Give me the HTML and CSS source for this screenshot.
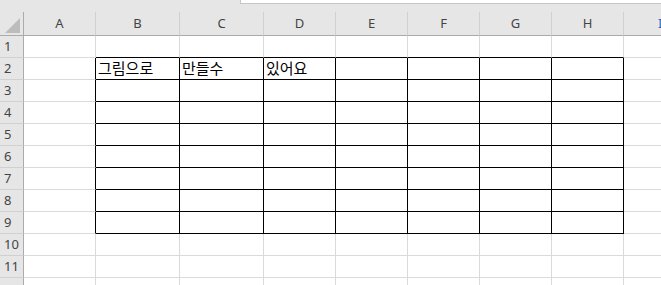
FILE: index.html
```html
<!DOCTYPE html>
<html lang="ko">
<head>
    <meta charset="UTF-8">
    <title>Sheet1</title>
    <link rel="stylesheet" href="styles.css">
</head>
<body>
    <div class="topbar"><div class="formula-box"></div></div>
    <div class="sheet">
        <!-- kolomkoppen -->
        <div class="corner"><span class="tri"></span></div>
        <div class="colhead">A</div><div class="colhead">B</div><div class="colhead">C</div><div class="colhead">D</div>
        <div class="colhead">E</div><div class="colhead">F</div><div class="colhead">G</div><div class="colhead">H</div><div class="colhead last">I</div>

        <div class="rowhead">1</div>
        <div class="cell"></div><div class="cell tb"></div><div class="cell tb"></div><div class="cell tb"></div><div class="cell tb"></div><div class="cell tb"></div><div class="cell tb"></div><div class="cell tb"></div><div class="cell"></div>

        <div class="rowhead">2</div>
        <div class="cell lb"></div><div class="cell box">그림으로</div><div class="cell box">만들수</div><div class="cell box">있어요</div><div class="cell box"></div><div class="cell box"></div><div class="cell box"></div><div class="cell box"></div><div class="cell"></div>

        <div class="rowhead">3</div>
        <div class="cell lb"></div><div class="cell box"></div><div class="cell box"></div><div class="cell box"></div><div class="cell box"></div><div class="cell box"></div><div class="cell box"></div><div class="cell box"></div><div class="cell"></div>

        <div class="rowhead">4</div>
        <div class="cell lb"></div><div class="cell box"></div><div class="cell box"></div><div class="cell box"></div><div class="cell box"></div><div class="cell box"></div><div class="cell box"></div><div class="cell box"></div><div class="cell"></div>

        <div class="rowhead">5</div>
        <div class="cell lb"></div><div class="cell box"></div><div class="cell box"></div><div class="cell box"></div><div class="cell box"></div><div class="cell box"></div><div class="cell box"></div><div class="cell box"></div><div class="cell"></div>

        <div class="rowhead">6</div>
        <div class="cell lb"></div><div class="cell box"></div><div class="cell box"></div><div class="cell box"></div><div class="cell box"></div><div class="cell box"></div><div class="cell box"></div><div class="cell box"></div><div class="cell"></div>

        <div class="rowhead">7</div>
        <div class="cell lb"></div><div class="cell box"></div><div class="cell box"></div><div class="cell box"></div><div class="cell box"></div><div class="cell box"></div><div class="cell box"></div><div class="cell box"></div><div class="cell"></div>

        <div class="rowhead">8</div>
        <div class="cell lb"></div><div class="cell box"></div><div class="cell box"></div><div class="cell box"></div><div class="cell box"></div><div class="cell box"></div><div class="cell box"></div><div class="cell box"></div><div class="cell"></div>

        <div class="rowhead">9</div>
        <div class="cell lb"></div><div class="cell box"></div><div class="cell box"></div><div class="cell box"></div><div class="cell box"></div><div class="cell box"></div><div class="cell box"></div><div class="cell box"></div><div class="cell"></div>

        <div class="rowhead">10</div>
        <div class="cell"></div><div class="cell"></div><div class="cell"></div><div class="cell"></div><div class="cell"></div><div class="cell"></div><div class="cell"></div><div class="cell"></div><div class="cell"></div>

        <div class="rowhead">11</div>
        <div class="cell"></div><div class="cell"></div><div class="cell"></div><div class="cell"></div><div class="cell"></div><div class="cell"></div><div class="cell"></div><div class="cell"></div><div class="cell"></div>

        <div class="rowhead"></div>
        <div class="cell"></div><div class="cell"></div><div class="cell"></div><div class="cell"></div><div class="cell"></div><div class="cell"></div><div class="cell"></div><div class="cell"></div><div class="cell"></div>
    </div>
</body>
</html>
```

FILE: styles.css
```css
* {
    box-sizing: border-box;
}
body {
    margin: 0;
    background: #ffffff;
    font-family: "Noto Sans", "Noto Sans CJK KR", sans-serif;
    overflow: hidden;
}
.topbar {
    height: 12px;
    background: #e6e6e6;
    display: flex;
}
.formula-box {
    margin-left: 240px;
    flex-grow: 1;
    height: 4px;
    background: #ffffff;
    border-left: 1px solid #c6c6c6;
    border-bottom: 1px solid #c6c6c6;
}
.sheet {
    display: grid;
    grid-template-columns: 24px 72px 84px 84px 72px 72px 72px 72px 72px 1fr;
    grid-template-rows: 24px repeat(12, 22px);
}
.corner {
    background: #e6e6e6;
    border-right: 1px solid #ababab;
    border-bottom: 1px solid #ababab;
    position: relative;
}
.tri {
    position: absolute;
    left: 5px;
    top: 6px;
    width: 0;
    height: 0;
    border-left: 15px solid transparent;
    border-bottom: 15px solid #bcbcbc;
}
.colhead {
    background: #e6e6e6;
    border-right: 1px solid #d0d0d0;
    border-bottom: 1px solid #ababab;
    color: #444444;
    font-size: 13px;
    display: flex;
    align-items: center;
    justify-content: center;
    padding-bottom: 1px;
}
.colhead.last {
    justify-content: flex-start;
    padding-left: 34px;
    color: #2f6cb3;
    border-right: none;
}
.rowhead {
    background: #e6e6e6;
    border-right: 1px solid #ababab;
    border-bottom: 1px solid #d0d0d0;
    color: #444444;
    font-size: 13px;
    padding-left: 4px;
    line-height: 21px;
}
.cell {
    border-right: 1px solid #dadada;
    border-bottom: 1px solid #dadada;
    font-family: "Noto Sans CJK KR", sans-serif;
    font-size: 15px;
    line-height: 20px;
    padding-left: 2px;
    color: #000000;
    white-space: nowrap;
}
.cell.lb {
    border-right-color: #000000;
}
.cell.tb {
    border-bottom-color: #000000;
}
.cell.box {
    border-right-color: #000000;
    border-bottom-color: #000000;
}
```
